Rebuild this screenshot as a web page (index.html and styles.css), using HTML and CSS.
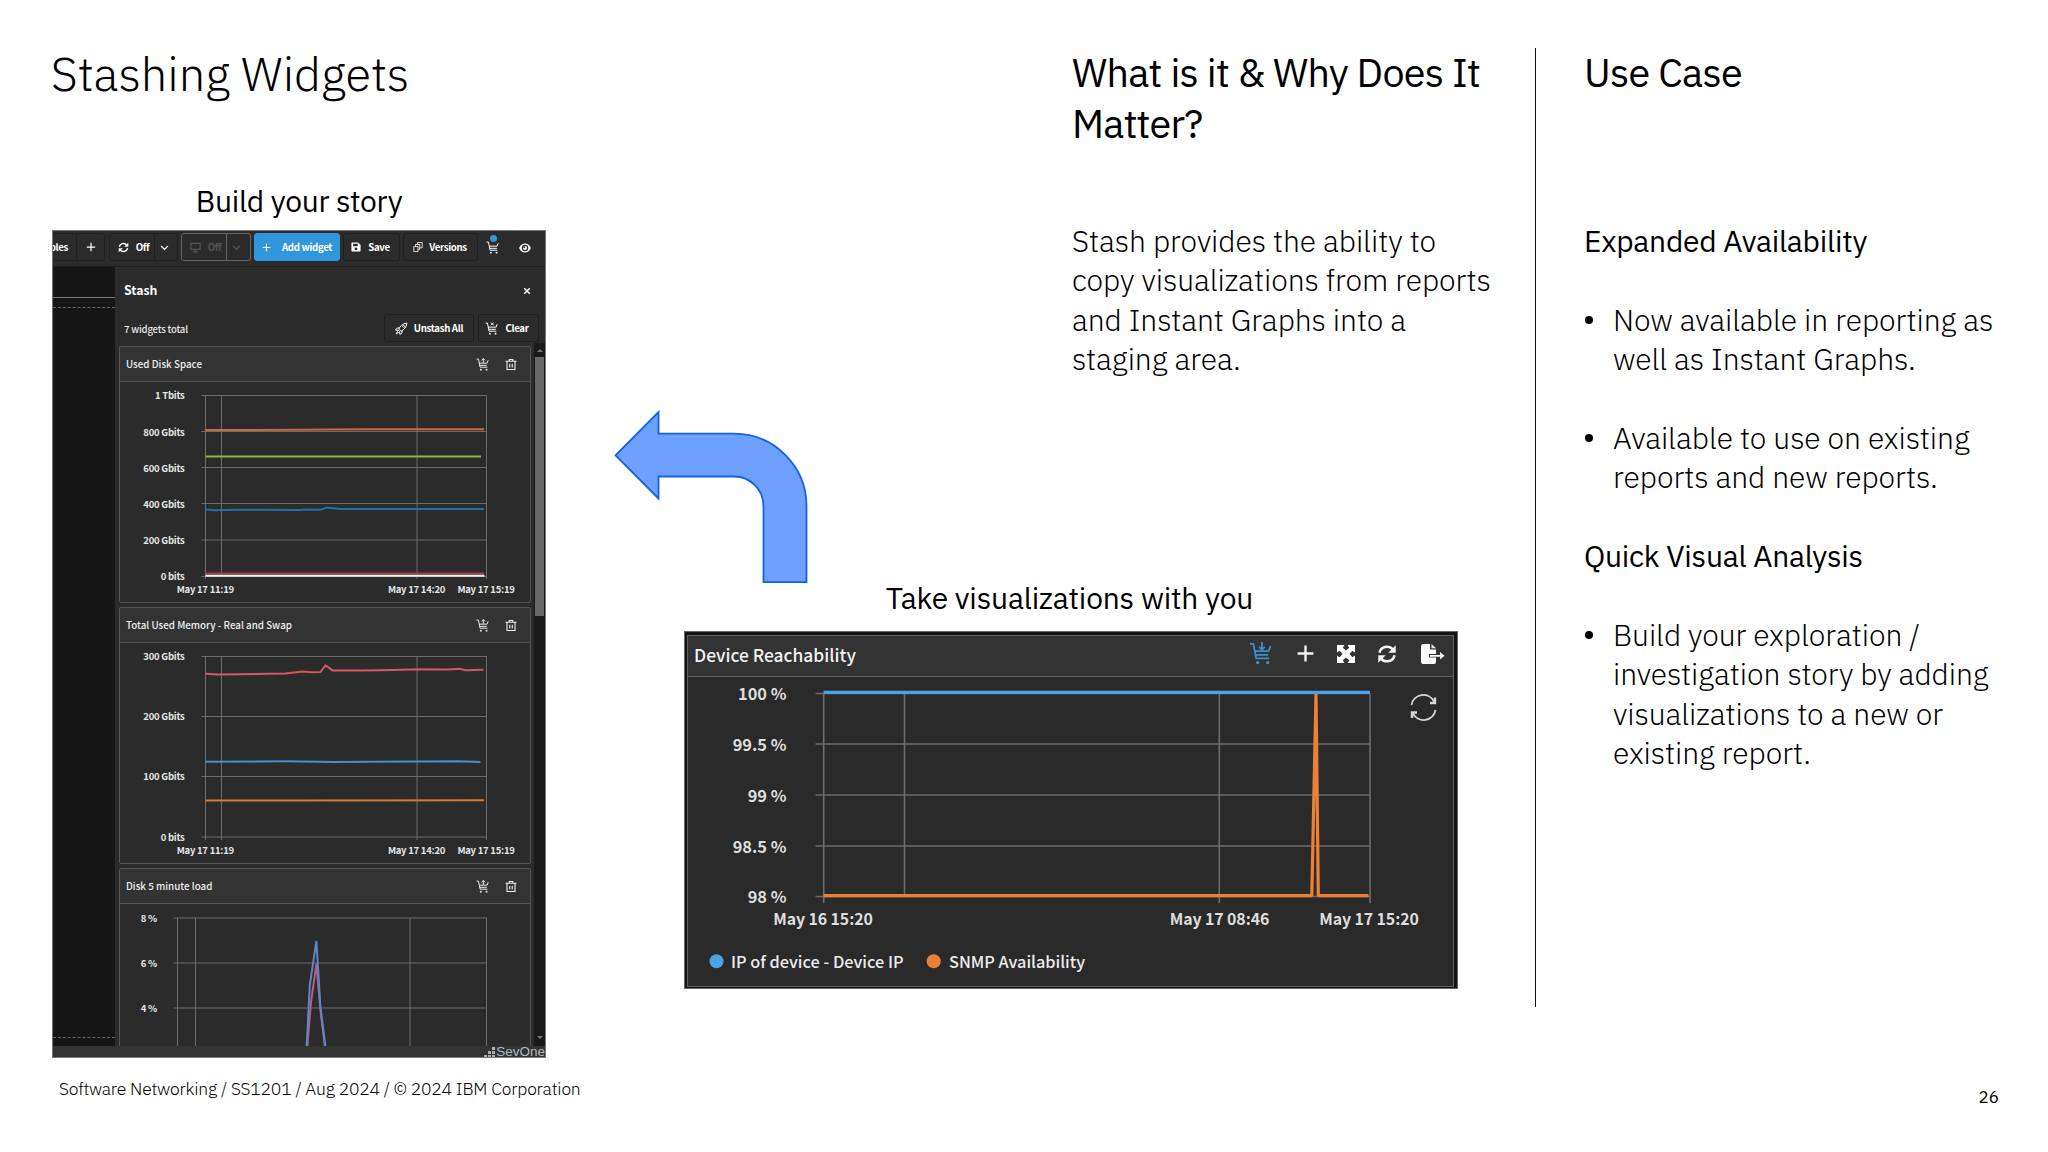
FILE: index.html
```html
<!DOCTYPE html>
<html lang="en">
<head>
    <meta charset="utf-8">
    <title>Stashing Widgets</title>
    <link rel="stylesheet" href="styles.css">
</head>
<body>
    <svg class="sprite">
        <symbol id="i-cart" viewBox="0 0 24 24">
            <path d="M1 2h3.5l3 15H21M6 9.5h14.5L22.5 4M7 13.5h13" fill="none" stroke="currentColor" stroke-width="1.8"/>
            <circle cx="9" cy="21.5" r="1.8" fill="currentColor"/>
            <circle cx="19.5" cy="21.5" r="1.8" fill="currentColor"/>
        </symbol>
        <symbol id="i-refresh" viewBox="0 0 24 24">
            <path d="M3 10.5A9 8.5 0 0 1 19 6.5M21 13.5A9 8.5 0 0 1 5 17.5" fill="none" stroke="currentColor" stroke-width="3"/>
            <path d="M22.5 1.5v9h-9zM1.5 22.5v-9h9z" fill="currentColor"/>
        </symbol>
        <symbol id="i-plus" viewBox="0 0 24 24">
            <path d="M12 2v20M2 12h20" fill="none" stroke="currentColor" stroke-width="3"/>
        </symbol>
        <symbol id="i-chevron" viewBox="0 0 24 24">
            <path d="M3 8l9 9 9-9" fill="none" stroke="currentColor" stroke-width="3.5"/>
        </symbol>
        <symbol id="i-trash" viewBox="0 0 24 24">
            <path d="M1 5.5h22M8.500 5V2h7v3M4 6v16h16V6M9.5 10.5v7.5M14.5 10.5v7.5" fill="none" stroke="currentColor" stroke-width="2.2"/>
        </symbol>
    </svg>

    <div class="slide">
        <main class="content">
            <section class="story">
                <h1>Stashing Widgets</h1>
                <p class="caption caption-story">Build your story</p>

                <div class="app">
                    <div class="toolbar">
                        <div class="btn btn-tables">bles</div>
                        <div class="btn btn-plus"><svg class="icon-10"><use href="#i-plus"/></svg></div>
                        <div class="btn btn-refresh"><svg class="icon-11"><use href="#i-refresh"/></svg>Off</div>
                        <div class="btn btn-drop"><svg class="icon-9"><use href="#i-chevron"/></svg></div>
                        <div class="btn btn-tv">
                            <svg class="icon-11" viewBox="0 0 24 24"><path d="M2 3h20v13H2zM12 16v5M6 21.5h12" fill="none" stroke="currentColor" stroke-width="2.5"/></svg>Off
                        </div>
                        <div class="btn btn-tv-drop"><svg class="icon-9"><use href="#i-chevron"/></svg></div>
                        <div class="btn btn-add"><svg class="icon-9"><use href="#i-plus"/></svg>Add widget</div>
                        <div class="btn btn-save">
                            <svg class="icon-10" viewBox="0 0 24 24"><path fill-rule="evenodd" d="M3 1h14l6 6v14a2 2 0 0 1-2 2H3a2 2 0 0 1-2-2V3a2 2 0 0 1 2-2zM5 4v6h11V4zM12 13a3.5 3.5 0 1 0 .01 0z" fill="currentColor"/></svg>Save
                        </div>
                        <div class="btn btn-versions">
                            <svg class="icon-10" viewBox="0 0 24 24"><path d="M2 11h10v12H2zM6 10V6h10v12h-3M11 5V1h11v13h-5" fill="none" stroke="currentColor" stroke-width="2"/></svg>Versions
                        </div>
                        <div class="stash-link"><svg class="icon-13"><use href="#i-cart"/></svg><span class="dot"></span></div>
                        <svg class="icon-eye" viewBox="0 0 24 20"><path d="M0 10C4 2.5 8 1 12 1s8 1.5 12 9c-4 7.5-8 9-12 9S4 17.5 0 10z" fill="#fff"/><circle cx="12" cy="10" r="6.5" fill="#2b2b2b"/><circle cx="12" cy="10" r="4" fill="#fff"/><circle cx="10.5" cy="8.5" r="1.8" fill="#2b2b2b"/></svg>
                    </div>

                    <div class="workspace">
                        <div class="canvas">
                            <div class="canvas-head"></div>
                            <div class="canvas-grid"></div>
                        </div>
                        <div class="drawer">
                            <div class="drawer-head">
                                <span>Stash</span>
                                <svg class="icon-close" viewBox="0 0 10 10"><path d="M1.5 1.5l7 7M8.5 1.5l-7 7" stroke="#fff" stroke-width="1.8"/></svg>
                            </div>
                            <div class="drawer-actions">
                                <span class="count">7 widgets total</span>
                                <div class="btn btn-unstash">
                                    <svg class="icon-13" viewBox="0 0 24 24"><path d="M22 2C14 3 10 7 7 13l4 4c6-3 10-7 11-15zM8 11H4l-3 4 6 .5M13 16v4l-4 3-.5-6M5 17l-3 5 5-3" fill="none" stroke="currentColor" stroke-width="1.8"/><circle cx="16" cy="8" r="1.8" fill="none" stroke="currentColor" stroke-width="1.5"/></svg>Unstash All
                                </div>
                                <div class="btn btn-clear">
                                    <svg class="icon-13" viewBox="0 0 24 24"><use href="#i-cart"/><path d="M11 1l5 5M16 1l-5 5" stroke="currentColor" stroke-width="1.8"/></svg>Clear
                                </div>
                            </div>

                            <div class="scroller">
                                <div class="cards">
                                    <article class="card">
                                        <header>
                                            <span>Used Disk Space</span>
                                            <svg class="icon-13" viewBox="0 0 24 24"><use href="#i-cart"/><path d="M13.5 9V1M10 4.5L13.5 1 17 4.5" fill="none" stroke="currentColor" stroke-width="1.8"/></svg>
                                            <svg class="icon-12"><use href="#i-trash"/></svg>
                                        </header>
                                        <svg class="chart" viewBox="120 382 410 220">
                                            <path class="grid" d="M201.5 395.5H487M201.5 431.5H487M201.5 467.5H487M201.5 503.5H487M201.5 540H487M201.5 576.5H487M205.5 395v184M221.5 395v181M417 395v184M486.5 395v184"/>
                                            <g class="ylab">
                                                <text x="184.5" y="399">1 Tbits</text>
                                                <text x="184.5" y="435.5">800 Gbits</text>
                                                <text x="184.5" y="471.5">600 Gbits</text>
                                                <text x="184.5" y="508">400 Gbits</text>
                                                <text x="184.5" y="544">200 Gbits</text>
                                                <text x="184.5" y="580">0 bits</text>
                                            </g>
                                            <g class="xlab">
                                                <text x="205.3" y="592.5">May 17 11:19</text>
                                                <text x="416.5" y="592.5">May 17 14:20</text>
                                                <text x="486" y="592.5">May 17 15:19</text>
                                            </g>
                                            <path class="line" stroke="#d3683a" d="M205.5 430H255L368 429.2H484"/>
                                            <path class="line" stroke="#84bd3a" d="M205.5 456.5H481"/>
                                            <path class="line" stroke="#1f72a8" d="M205.5 509.5l10 .7 20-.5 65 .4 5-.5 15 .2 6-2.3 5 .6 9 .8H484"/>
                                            <path class="line" stroke="#a83c44" d="M205.5 573.5H484"/>
                                            <path class="line" stroke="#f0f0f0" d="M205.5 575.7H484.5"/>
                                        </svg>
                                    </article>

                                    <article class="card">
                                        <header>
                                            <span>Total Used Memory - Real and Swap</span>
                                            <svg class="icon-13" viewBox="0 0 24 24"><use href="#i-cart"/><path d="M13.5 9V1M10 4.5L13.5 1 17 4.5" fill="none" stroke="currentColor" stroke-width="1.8"/></svg>
                                            <svg class="icon-12"><use href="#i-trash"/></svg>
                                        </header>
                                        <svg class="chart" viewBox="120 643 410 220">
                                            <path class="grid" d="M201.5 656.5H487M201.5 716.5H487M201.5 776.5H487M201.5 837H487M205.5 656v184M221.5 656v184M417 656v184M486.5 656v184"/>
                                            <g class="ylab">
                                                <text x="184.5" y="660">300 Gbits</text>
                                                <text x="184.5" y="720">200 Gbits</text>
                                                <text x="184.5" y="780">100 Gbits</text>
                                                <text x="184.5" y="841">0 bits</text>
                                            </g>
                                            <g class="xlab">
                                                <text x="205.3" y="853.5">May 17 11:19</text>
                                                <text x="416.5" y="853.5">May 17 14:20</text>
                                                <text x="486" y="853.5">May 17 15:19</text>
                                            </g>
                                            <path class="line" stroke="#d8565e" d="M205.5 673.7l12 .9 20-.4 48-.7 17-1.9 9 .7 9-.2 5-6.8 7 5.1 30 .2 30-.6 28-.8 28 .4 11-.8 6 1.4 18-.5"/>
                                            <path class="line" stroke="#3f92cc" d="M205.5 761.7l80-.4 48 .6 80-.5 45-.1 22 .6"/>
                                            <path class="line" stroke="#d37c35" d="M205.5 800.6H290l194-.3"/>
                                        </svg>
                                    </article>

                                    <article class="card">
                                        <header>
                                            <span>Disk 5 minute load</span>
                                            <svg class="icon-13" viewBox="0 0 24 24"><use href="#i-cart"/><path d="M13.5 9V1M10 4.5L13.5 1 17 4.5" fill="none" stroke="currentColor" stroke-width="1.8"/></svg>
                                            <svg class="icon-12"><use href="#i-trash"/></svg>
                                        </header>
                                        <svg class="chart" viewBox="120 904 410 220">
                                            <path class="grid" d="M173.5 918H487M173.5 963H487M173.5 1008H487M177.5 918v206M195.5 918v206M410 918v206M486.5 918v206"/>
                                            <g class="ylab">
                                                <text x="157" y="922">8 %</text>
                                                <text x="157" y="967">6 %</text>
                                                <text x="157" y="1012">4 %</text>
                                            </g>
                                            <path class="line" stroke="#b45f8c" d="M307 1050l4-48 5.4-38 4 46 5 40"/>
                                            <path class="line" stroke="#5f86c8" d="M306.5 1050l3.3-65 6.6-44 4 66 5.5 43"/>
                                        </svg>
                                    </article>
                                </div>
                                <div class="scrollbar">
                                    <span class="arrow-up"></span>
                                    <span class="thumb"></span>
                                    <span class="arrow-down"></span>
                                </div>
                            </div>
                        </div>
                    </div>

                    <div class="brand">
                        <svg class="brand-dots" viewBox="0 0 12 12"><path d="M9 0h3v3H9zM9 4h3v3H9zM9 8h3v3H9zM5 4h3v3H5zM5 8h3v3H5zM1 8h3v3H1z" fill="#a7adb3"/></svg>
                        <span>SevOne</span>
                    </div>
                </div>
            </section>

            <section class="middle">
                <div class="intro">
                    <h2>What is it &amp; Why Does It<br>Matter?</h2>
                    <p>Stash provides the ability to<br>copy visualizations from reports<br>and Instant Graphs into a<br>staging area.</p>
                </div>

                <svg class="turn-arrow" viewBox="614 410 194 174">
                    <path d="M615.5 455.3L658.5 412v21.7H734A72.5 72.5 0 0 1 806.5 506v76.2H763.5V506A29.5 29.5 0 0 0 734 476.5H658.5V498.5z" fill="#6ea1ff" stroke="#1062e6" stroke-width="1.8"/>
                </svg>

                <p class="caption caption-take">Take visualizations with you</p>

                <div class="device">
                    <div class="device-inner">
                        <header>
                            <span>Device Reachability</span>
                            <svg class="d-cart" viewBox="0 0 24 24"><use href="#i-cart"/><path d="M13.5 0v8M10.5 5L13.5 8 16.500 5" fill="none" stroke="currentColor" stroke-width="1.8"/></svg>
                            <svg class="d-plus"><use href="#i-plus"/></svg>
                            <svg class="d-expand" viewBox="0 0 18 18"><path d="M0 0h7.5L5.8 2.700 9 5.500l3.200-2.800L10.500 0H18v7.500l-2.700-1.700L12.500 9l2.800 3.200 2.700-1.700V18h-7.500l1.700-2.700L9 12.500l-3.200 2.800L7.500 18H0v-7.500l2.700 1.700L5.500 9 2.700 5.800 0 7.500z" fill="#fff"/></svg>
                            <svg class="d-refresh"><use href="#i-refresh"/></svg>
                            <svg class="d-export" viewBox="0 0 24 20"><path d="M2 0h7v5.5h6V10H8v3.5h7V18a2 2 0 0 1-2 2H2a2 2 0 0 1-2-2V2a2 2 0 0 1 2-2zM10.5 0L15 4.3h-4.500z" fill="#fff"/><path d="M9 11h10V8l4.500 3.800-4.500 3.700V12.800H9z" fill="#fff"/></svg>
                        </header>
                        <svg class="device-chart" viewBox="688 677 765 309">
                            <path class="grid grid-big" d="M815.5 693.5H1370M815.5 744H1370M815.5 795H1370M815.5 846H1370M815.5 896.5H1370M823.7 693v210M904.5 693v203M1219.3 693v210M1370 693v210"/>
                            <g class="ylab big">
                                <text x="786.5" y="700">100 %</text>
                                <text x="786.5" y="751">99.5 %</text>
                                <text x="786.5" y="802">99 %</text>
                                <text x="786.5" y="853">98.5 %</text>
                                <text x="786.5" y="903">98 %</text>
                            </g>
                            <g class="xlab big">
                                <text x="823" y="925">May 16 15:20</text>
                                <text x="1219.5" y="925">May 17 08:46</text>
                                <text x="1369" y="925">May 17 15:20</text>
                            </g>
                            <path d="M823.5 692.3H1370" fill="none" stroke="#4ba3e3" stroke-width="3.2"/>
                            <path d="M823.5 895.7H1311.8L1316 694 1318.3 895.7H1368.5" fill="none" stroke="#ee8035" stroke-width="3.2" stroke-linejoin="bevel"/>
                            <circle cx="716.5" cy="961.3" r="7" fill="#4ba3e3"/>
                            <circle cx="933.7" cy="961.3" r="7" fill="#ee8035"/>
                            <g class="legend">
                                <text x="731" y="967.5">IP of device - Device IP</text>
                                <text x="949" y="967.5">SNMP Availability</text>
                            </g>
                            <g fill="none" stroke="#d8d8d8" stroke-width="1.8">
                                <path d="M1411.5 705A12 12 0 0 1 1434 701.5M1435.5 710A12 12 0 0 1 1413 713.5"/>
                                <path d="M1435 697.5v5.5h-5M1412 718v-5.500h5" stroke-width="2.4"/>
                            </g>
                        </svg>
                    </div>
                </div>
            </section>

            <section class="use-case">
                <h2>Use Case</h2>
                <h3>Expanded Availability</h3>
                <ul>
                    <li>Now available in reporting as<br>well as Instant Graphs.</li>
                    <li>Available to use on existing<br>reports and new reports.</li>
                </ul>
                <h3>Quick Visual Analysis</h3>
                <ul>
                    <li>Build your exploration /<br>investigation story by adding<br>visualizations to a new or<br>existing report.</li>
                </ul>
            </section>
        </main>

        <footer class="slide-footer">
            <span class="source">Software Networking / SS1201 / Aug 2024 / © 2024 IBM Corporation</span>
            <span class="page">26</span>
        </footer>
    </div>
</body>
</html>
```
FILE: styles.css
```css
* {
    box-sizing: border-box;
}
html, body {
    margin: 0;
    padding: 0;
    overflow: hidden;
    background: #fff;
}
h1, h2, h3, p, ul {
    margin: 0;
    padding: 0;
    font-weight: 400;
}
svg {
    display: block;
    flex: none;
}
.sprite {
    display: none;
}
.slide {
    width: 2048px;
    height: 1152px;
    display: flex;
    flex-direction: column;
    font-family: "IBM Plex Sans", "Open Sans", sans-serif;
    color: #000;
    white-space: nowrap;
}
.content {
    display: flex;
    height: 1075px;
    padding-left: 52px;
}

/* left column */
.story {
    width: 494px;
    padding-top: 44px;
}
h1 {
    margin-left: -1px;
    font-size: 47px;
    font-weight: 300;
    line-height: 60px;
}
.caption {
    font-size: 30px;
    line-height: 36px;
    letter-spacing: -0.2px;
    text-align: center;
}
.caption-story {
    margin-top: 79px;
    letter-spacing: -0.3px;
}
.app {
    margin-top: 11px;
    width: 494px;
    height: 828px;
    border: 1px solid #777;
    background: #2b2b2b;
    overflow: hidden;
    display: flex;
    flex-direction: column;
    font-family: "Source Sans Pro", "Noto Sans CJK SC", sans-serif;
    color: #fff;
}
.toolbar {
    flex: none;
    height: 36px;
    display: flex;
    align-items: flex-start;
    padding-top: 2px;
    border-bottom: 1px solid #1d1d1d;
}
.btn {
    flex: none;
    height: 28px;
    display: flex;
    align-items: center;
    justify-content: center;
    border: 1px solid #1f1f1f;
    border-radius: 3px;
    font-size: 9.7px;
    font-weight: 700;
    line-height: 16px;
    letter-spacing: -0.35px;
}
.btn-tables {
    width: 24px;
    justify-content: flex-end;
    padding-right: 8px;
    border-left: 0;
    border-radius: 0;
}
.btn-plus {
    width: 28px;
    border-left: 0;
}
.btn-refresh {
    width: 46px;
    margin-left: 4px;
    padding-left: 3px;
    gap: 7px;
    border-radius: 3px 0 0 3px;
}
.btn-drop {
    width: 23px;
    padding-right: 4px;
    border-left: 0;
    border-radius: 0 3px 3px 0;
}
.btn-tv {
    width: 46px;
    margin-left: 3px;
    padding-left: 3px;
    gap: 7px;
    border-color: #666;
    border-radius: 3px 0 0 3px;
    color: #555;
}
.btn-tv-drop {
    width: 24px;
    padding-right: 4px;
    border-color: #666;
    border-left: 0;
    border-radius: 0 3px 3px 0;
    color: #555;
}
.btn-add {
    width: 86px;
    margin-left: 3px;
    gap: 11px;
    background: #3097dd;
    border-color: #3097dd;
}
.btn-save {
    width: 57px;
    margin-left: 3px;
    padding-right: 2px;
    gap: 7px;
}
.btn-versions {
    width: 75px;
    margin-left: 3px;
    padding-right: 1px;
    gap: 6px;
}
.stash-link {
    position: relative;
    margin: 8px 0 0 8px;
}
.dot {
    position: absolute;
    top: -6px;
    left: 4px;
    width: 7px;
    height: 7px;
    border-radius: 50%;
    background: #3097dd;
}
.icon-9 { width: 9px; height: 9px; }
.icon-10 { width: 10px; height: 10px; }
.icon-11 { width: 11px; height: 11px; }
.icon-12 { width: 12px; height: 13px; }
.icon-13 { width: 13px; height: 13px; }
.icon-eye {
    width: 12px;
    height: 10px;
    margin: 10px 0 0 20px;
}
.workspace {
    flex: none;
    height: 779px;
    display: flex;
}
.canvas {
    width: 62px;
    background: #161616;
}
.canvas-head {
    height: 31px;
    border-bottom: 1px solid #777;
}
.canvas-grid {
    height: 731px;
    margin-top: 9px;
    border: dashed #666;
    border-width: 1px 0;
}
.drawer {
    width: 430px;
    display: flex;
    flex-direction: column;
}
.drawer-head {
    display: flex;
    justify-content: space-between;
    align-items: center;
    height: 47px;
    padding: 0 14px 0 9px;
    font-size: 12.3px;
    font-weight: 700;
}
.drawer-head span {
    margin-top: -1px;
}
.icon-close {
    width: 8px;
    height: 8px;
}
.drawer-actions {
    display: flex;
    height: 29px;
    padding-left: 9px;
}
.count {
    width: 260px;
    font-size: 9.6px;
    font-weight: 500;
    line-height: 28px;
    letter-spacing: -0.2px;
    color: #e6e6e6;
    padding-top: 1px;
}
.btn-unstash {
    width: 90px;
    gap: 6px;
    flex: none;
}
.btn-clear {
    width: 61px;
    margin-left: 4px;
    padding-right: 3px;
    gap: 7px;
}
.scroller {
    display: flex;
    height: 703px;
    overflow: hidden;
}
.cards {
    width: 421px;
    padding: 3px 0 0 4px;
    overflow: hidden;
}
.card {
    width: 412px;
    height: 257px;
    margin-bottom: 4px;
    border: 1px solid #555;
    border-radius: 2px;
}
.card header {
    display: flex;
    align-items: center;
    height: 35px;
    padding: 0 13px 0 6px;
    background: #333;
    border-bottom: 1px solid #555;
    font-size: 9.8px;
    font-weight: 500;
    color: #eee;
}
.card header span {
    flex: 1;
}
.card header svg + svg {
    margin-left: 16px;
}
.chart {
    width: 410px;
    height: 220px;
}
.grid {
    fill: none;
    stroke: #6c6c6c;
    stroke-width: 1;
}
.grid-big {
    stroke-width: 1.6;
}
.line {
    fill: none;
    stroke-width: 2;
}
.chart text {
    font-size: 9.5px;
    font-weight: 700;
    letter-spacing: -0.25px;
    fill: #e6e6e6;
}
.ylab {
    text-anchor: end;
}
.xlab {
    text-anchor: middle;
}
.scrollbar {
    width: 11px;
    background: #191919;
    display: flex;
    flex-direction: column;
    align-items: center;
}
.thumb {
    width: 9px;
    height: 259px;
    margin: 5px 0 auto;
    background: #686868;
}
.arrow-up, .arrow-down {
    border: 3px solid transparent;
}
.arrow-up {
    margin-top: 3px;
    border-bottom-color: #777;
}
.arrow-down {
    margin-bottom: 4px;
    border-top-color: #777;
}
.brand {
    flex: 1;
    display: flex;
    justify-content: flex-end;
    padding-top: 1px;
    background: #333;
    font-family: "Liberation Sans", sans-serif;
    font-size: 13.5px;
    line-height: 10px;
    color: #b4babf;
}
.brand-dots {
    width: 12px;
    height: 12px;
    margin-right: 1px;
}

/* middle column */
.middle {
    width: 989px;
    padding-top: 47px;
}
.intro {
    height: 363px;
    margin-left: 526px;
}
h2 {
    font-size: 39.5px;
    line-height: 51px;
    letter-spacing: -0.7px;
}
.intro p {
    margin-top: 72px;
    font-size: 30px;
    font-weight: 300;
    line-height: 39.4px;
    letter-spacing: -0.07px;
}
.turn-arrow {
    width: 194px;
    height: 174px;
    margin-left: 68px;
}
.caption-take {
    width: 773px;
    margin: -4px 0 15px 137px;
}
.device {
    width: 774px;
    height: 358px;
    margin-left: 138px;
    padding: 3px 3px 1px 2px;
    border: 1px solid #666;
    background: #141414;
    font-family: "Source Sans Pro", "Noto Sans CJK SC", sans-serif;
    color: #f2f2f2;
}
.device-inner {
    height: 352px;
    border: 1px solid #606060;
    background: #2a2a2a;
}
.device header {
    display: flex;
    align-items: center;
    height: 41px;
    padding: 0 8px 5px 6px;
    border-bottom: 1px solid #606060;
    background: #333;
}
.device header span {
    flex: 1;
    padding-top: 2px;
    font-size: 17.4px;
    font-weight: 500;
    line-height: 30px;
}
.d-cart {
    width: 23px;
    height: 23px;
    color: #3c8fcb;
}
.d-plus {
    width: 19px;
    height: 19px;
    margin-left: 24px;
}
.d-expand {
    width: 18px;
    height: 18px;
    margin-left: 22px;
}
.d-refresh {
    width: 20px;
    height: 20px;
    margin-left: 22px;
}
.d-export {
    width: 24px;
    height: 20px;
    margin-left: 24px;
}
.device-chart {
    width: 765px;
    height: 309px;
}
.big {
    font-size: 16.4px;
    font-weight: 700;
    fill: #dedede;
}
.xlab.big {
    font-size: 15.9px;
    letter-spacing: -0.1px;
}
.legend {
    font-size: 16.3px;
    font-weight: 500;
    fill: #ececec;
}

/* right column */
.use-case {
    height: 959px;
    margin-top: 48px;
    padding-left: 48px;
    border-left: 1px solid #111;
}
.use-case h2 {
    margin-top: -1px;
}
h3 {
    font-size: 30px;
    line-height: 39.4px;
    letter-spacing: -0.25px;
}
.use-case h2 + h3 {
    margin-top: 123px;
}
ul {
    list-style: none;
}
li {
    display: flex;
    margin: 39.4px 0;
    font-size: 30px;
    font-weight: 300;
    line-height: 39.4px;
    letter-spacing: -0.07px;
}
li::before {
    content: "";
    width: 8px;
    height: 8px;
    margin: 16px 20px 0 1px;
    border-radius: 50%;
    background: #000;
}

.slide-footer {
    display: flex;
    justify-content: space-between;
    padding: 0 49px 0 59px;
    font-size: 17.5px;
    line-height: 28px;
}
.source {
    font-weight: 300;
    letter-spacing: -0.2px;
}
.page {
    padding-top: 8px;
    font-size: 17px;
}
```
